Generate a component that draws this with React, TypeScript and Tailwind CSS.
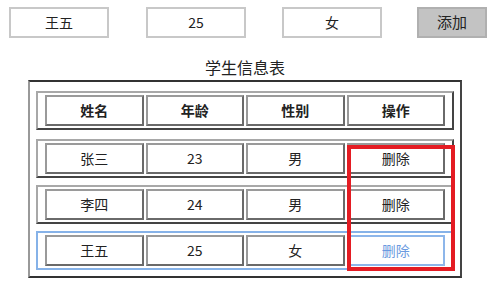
import React from 'react';

const rows = [
  { name: '张三', age: '23', sex: '男' },
  { name: '李四', age: '24', sex: '男' },
  { name: '王五', age: '25', sex: '女', active: true },
];

const font = "font-['Noto_Sans_CJK_SC','Noto_Sans',sans-serif]";

function Cell({ children, bold, blue }: { children: React.ReactNode; bold?: boolean; blue?: boolean }) {
  return (
    <div
      className={`w-[99px] h-[31px] flex items-center justify-center text-[14px] border-2 ${
        blue
          ? 'border-[#8db6ea] text-[#6a9ae0]'
          : 'border-t-[#9a9a9a] border-l-[#9a9a9a] border-r-[#6a6a6a] border-b-[#6a6a6a] text-[#222]'
      } ${bold ? 'font-bold' : ''}`}
    >
      {children}
    </div>
  );
}

function Row({ cells, bold, active }: { cells: string[]; bold?: boolean; active?: boolean }) {
  return (
    <div
      className={`flex gap-[2px] px-[7px] py-[2px] border-2 ${
        active
          ? 'border-[#86b2e8]'
          : 'border-t-[#a8a8a8] border-l-[#a8a8a8] border-r-[#444] border-b-[#444]'
      }`}
    >
      {cells.map((c, i) => (
        <Cell key={i} bold={bold} blue={active && i === 3}>
          {c}
        </Cell>
      ))}
    </div>
  );
}

export default function App() {
  return (
    <div className={`w-[496px] h-[290px] bg-white relative ${font}`}>
      {/* Form */}
      <div className="flex items-center pt-[7px] pl-[9px]">
        <div className="w-[100px] h-[31px] border-2 border-[#c8c8c8] flex items-center justify-center text-[14px] text-[#222]">
          王五
        </div>
        <div className="ml-[37px] w-[100px] h-[31px] border-2 border-[#c8c8c8] flex items-center justify-center text-[14px] text-[#222]">
          25
        </div>
        <div className="ml-[36px] w-[100px] h-[31px] border-2 border-[#c8c8c8] flex items-center justify-center text-[14px] text-[#222]">
          女
        </div>
        <button className="ml-[35px] w-[70px] h-[31px] bg-[#c3c3c3] border-2 border-[#b0b0b0] text-[15px] text-[#222]">
          添加
        </button>
      </div>

      {/* Table */}
      <div className="ml-[28px] w-[434px] mt-[17px]">
        <div className="text-center text-[16px] leading-[24px] text-[#222] mb-[1px]">学生信息表</div>
        <div className="border-2 border-t-[#333] border-l-[#999] border-r-[#444] border-b-[#333] pt-[9px] pb-[6px] px-[6px] flex flex-col">
          <Row cells={['姓名', '年龄', '性别', '操作']} bold />
          <div className="mt-[9px] flex flex-col gap-[7px]">
            {rows.map((r) => (
              <Row key={r.name} cells={[r.name, r.age, r.sex, '删除']} active={r.active} />
            ))}
          </div>
        </div>
      </div>

      {/* Highlight annotation */}
      <div className="absolute left-[347px] top-[145px] w-[108px] h-[126px] border-4 border-[#e41c23]" />
    </div>
  );
}
